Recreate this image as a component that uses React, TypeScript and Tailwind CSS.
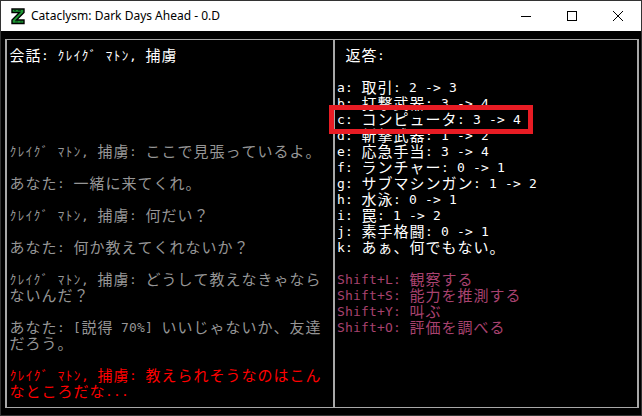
import React from 'react';
import clsx from 'clsx';

type Row = { text: string; color?: string };

const isWide = (ch: string) => {
  const c = ch.codePointAt(0) || 0;
  if (c >= 0xff61 && c <= 0xff9f) return false;
  return c >= 0x1100;
};

// one terminal row: half-width chars take 8px, full-width take 16px
const TermLine: React.FC<Row> = ({ text, color }) => (
  <div className={clsx('flex h-4 leading-4 whitespace-pre', color)}>
    {Array.from(text).map((ch, i) => (
      <span
        key={i}
        className={clsx(
          'shrink-0 text-center',
          isWide(ch) ? 'w-4 text-[15px]' : 'w-2'
        )}
      >
        {ch}
      </span>
    ))}
  </div>
);

const GRAY = 'text-[#969696]';
const WHITE = 'text-[#ffffff]';
const RED = 'text-[#ff0000]';
const PINK = 'text-[#a8426f]';

const npc = 'ｸﾚｲｸﾞ ﾏﾄﾝ, 捕虜';

const leftRows: Row[] = [
  { text: `会話: ${npc}`, color: WHITE },
  { text: '' },
  { text: '' },
  { text: '' },
  { text: '' },
  { text: '' },
  { text: `${npc}: ここで見張っているよ。`, color: GRAY },
  { text: '' },
  { text: 'あなた: 一緒に来てくれ。', color: GRAY },
  { text: '' },
  { text: `${npc}: 何だい？`, color: GRAY },
  { text: '' },
  { text: 'あなた: 何か教えてくれないか？', color: GRAY },
  { text: '' },
  { text: `${npc}: どうして教えなきゃなら`, color: GRAY },
  { text: 'ないんだ？', color: GRAY },
  { text: '' },
  { text: 'あなた: [説得 70%] いいじゃないか、友達', color: GRAY },
  { text: 'だろう。', color: GRAY },
  { text: '' },
  { text: `${npc}: 教えられそうなのはこん`, color: RED },
  { text: 'なところだな...', color: RED },
];

const rightRows: Row[] = [
  { text: ' 返答:', color: WHITE },
  { text: '' },
  { text: 'a: 取引: 2 -> 3', color: WHITE },
  { text: 'b: 打撃武器: 3 -> 4', color: WHITE },
  { text: 'c: コンピュータ: 3 -> 4', color: WHITE },
  { text: 'd: 斬撃武器: 1 -> 2', color: WHITE },
  { text: 'e: 応急手当: 3 -> 4', color: WHITE },
  { text: 'f: ランチャー: 0 -> 1', color: WHITE },
  { text: 'g: サブマシンガン: 1 -> 2', color: WHITE },
  { text: 'h: 水泳: 0 -> 1', color: WHITE },
  { text: 'i: 罠: 1 -> 2', color: WHITE },
  { text: 'j: 素手格闘: 0 -> 1', color: WHITE },
  { text: 'k: あぁ、何でもない。', color: WHITE },
  { text: '' },
  { text: 'Shift+L: 観察する', color: PINK },
  { text: 'Shift+S: 能力を推測する', color: PINK },
  { text: 'Shift+Y: 叫ぶ', color: PINK },
  { text: 'Shift+O: 評価を調べる', color: PINK },
];

const Logo = () => (
  <svg width="16" height="18" viewBox="0 0 16 18">
    <path
      d="M2 2h12v3.5L6.5 13H14v3.5H2V13l7.5-7.5H2z"
      fill="#1f9a35"
      stroke="#000"
      strokeWidth="1.4"
      strokeLinejoin="miter"
    />
    <path d="M4 3.5h2M8 3.5h3M5 15h3M10 15h2.5" stroke="#0b4d18" strokeWidth="1" />
  </svg>
);

const App: React.FC = () => {
  return (
    <div className="relative w-[642px] h-[416px] border border-[#333333] bg-black overflow-hidden">
      {/* title bar */}
      <div className="flex h-[30px] items-center bg-white">
        <div className="ml-[9px] mr-[5px] flex h-[18px] w-[16px] items-center">
          <Logo />
        </div>
        <span className="font-['Noto_Sans',sans-serif] text-[12px] text-black">
          Cataclysm: Dark Days Ahead - 0.D
        </span>
        <div className="ml-auto flex h-full">
          <div className="flex w-[46px] items-center justify-center">
            <svg width="10" height="10" viewBox="0 0 10 10">
              <path d="M0 5.5h10" stroke="#000" strokeWidth="1" />
            </svg>
          </div>
          <div className="flex w-[46px] items-center justify-center">
            <svg width="10" height="10" viewBox="0 0 10 10">
              <rect x="0.5" y="0.5" width="9" height="9" fill="none" stroke="#000" strokeWidth="1" />
            </svg>
          </div>
          <div className="flex w-[46px] items-center justify-center">
            <svg width="10" height="10" viewBox="0 0 10 10">
              <path d="M0 0L10 10M10 0L0 10" stroke="#000" strokeWidth="1" />
            </svg>
          </div>
        </div>
      </div>

      {/* terminal */}
      <div className="h-[384px] pt-[8px] pb-[7px] pl-[4px] pr-[2px] font-['DejaVu_Sans_Mono','Noto_Sans_CJK_JP',monospace] text-[13px]">
        <div className="flex h-full border-y border-x-2 border-[#a8a8a8]">
          <div className="w-[326px] shrink-0 pt-2 pl-[2px]">
            {leftRows.map((r, i) => (
              <TermLine key={i} {...r} />
            ))}
          </div>
          <div className="flex-1 border-l-2 border-[#a8a8a8] pt-2 pl-[2px]">
            {rightRows.map((r, i) => (
              <TermLine key={i} {...r} />
            ))}
          </div>
        </div>
      </div>

      {/* annotation box */}
      <div className="absolute left-[328px] top-[104px] h-[29px] w-[204px] border-[5px] border-[#e81c24]" />
    </div>
  );
};

export default App;
